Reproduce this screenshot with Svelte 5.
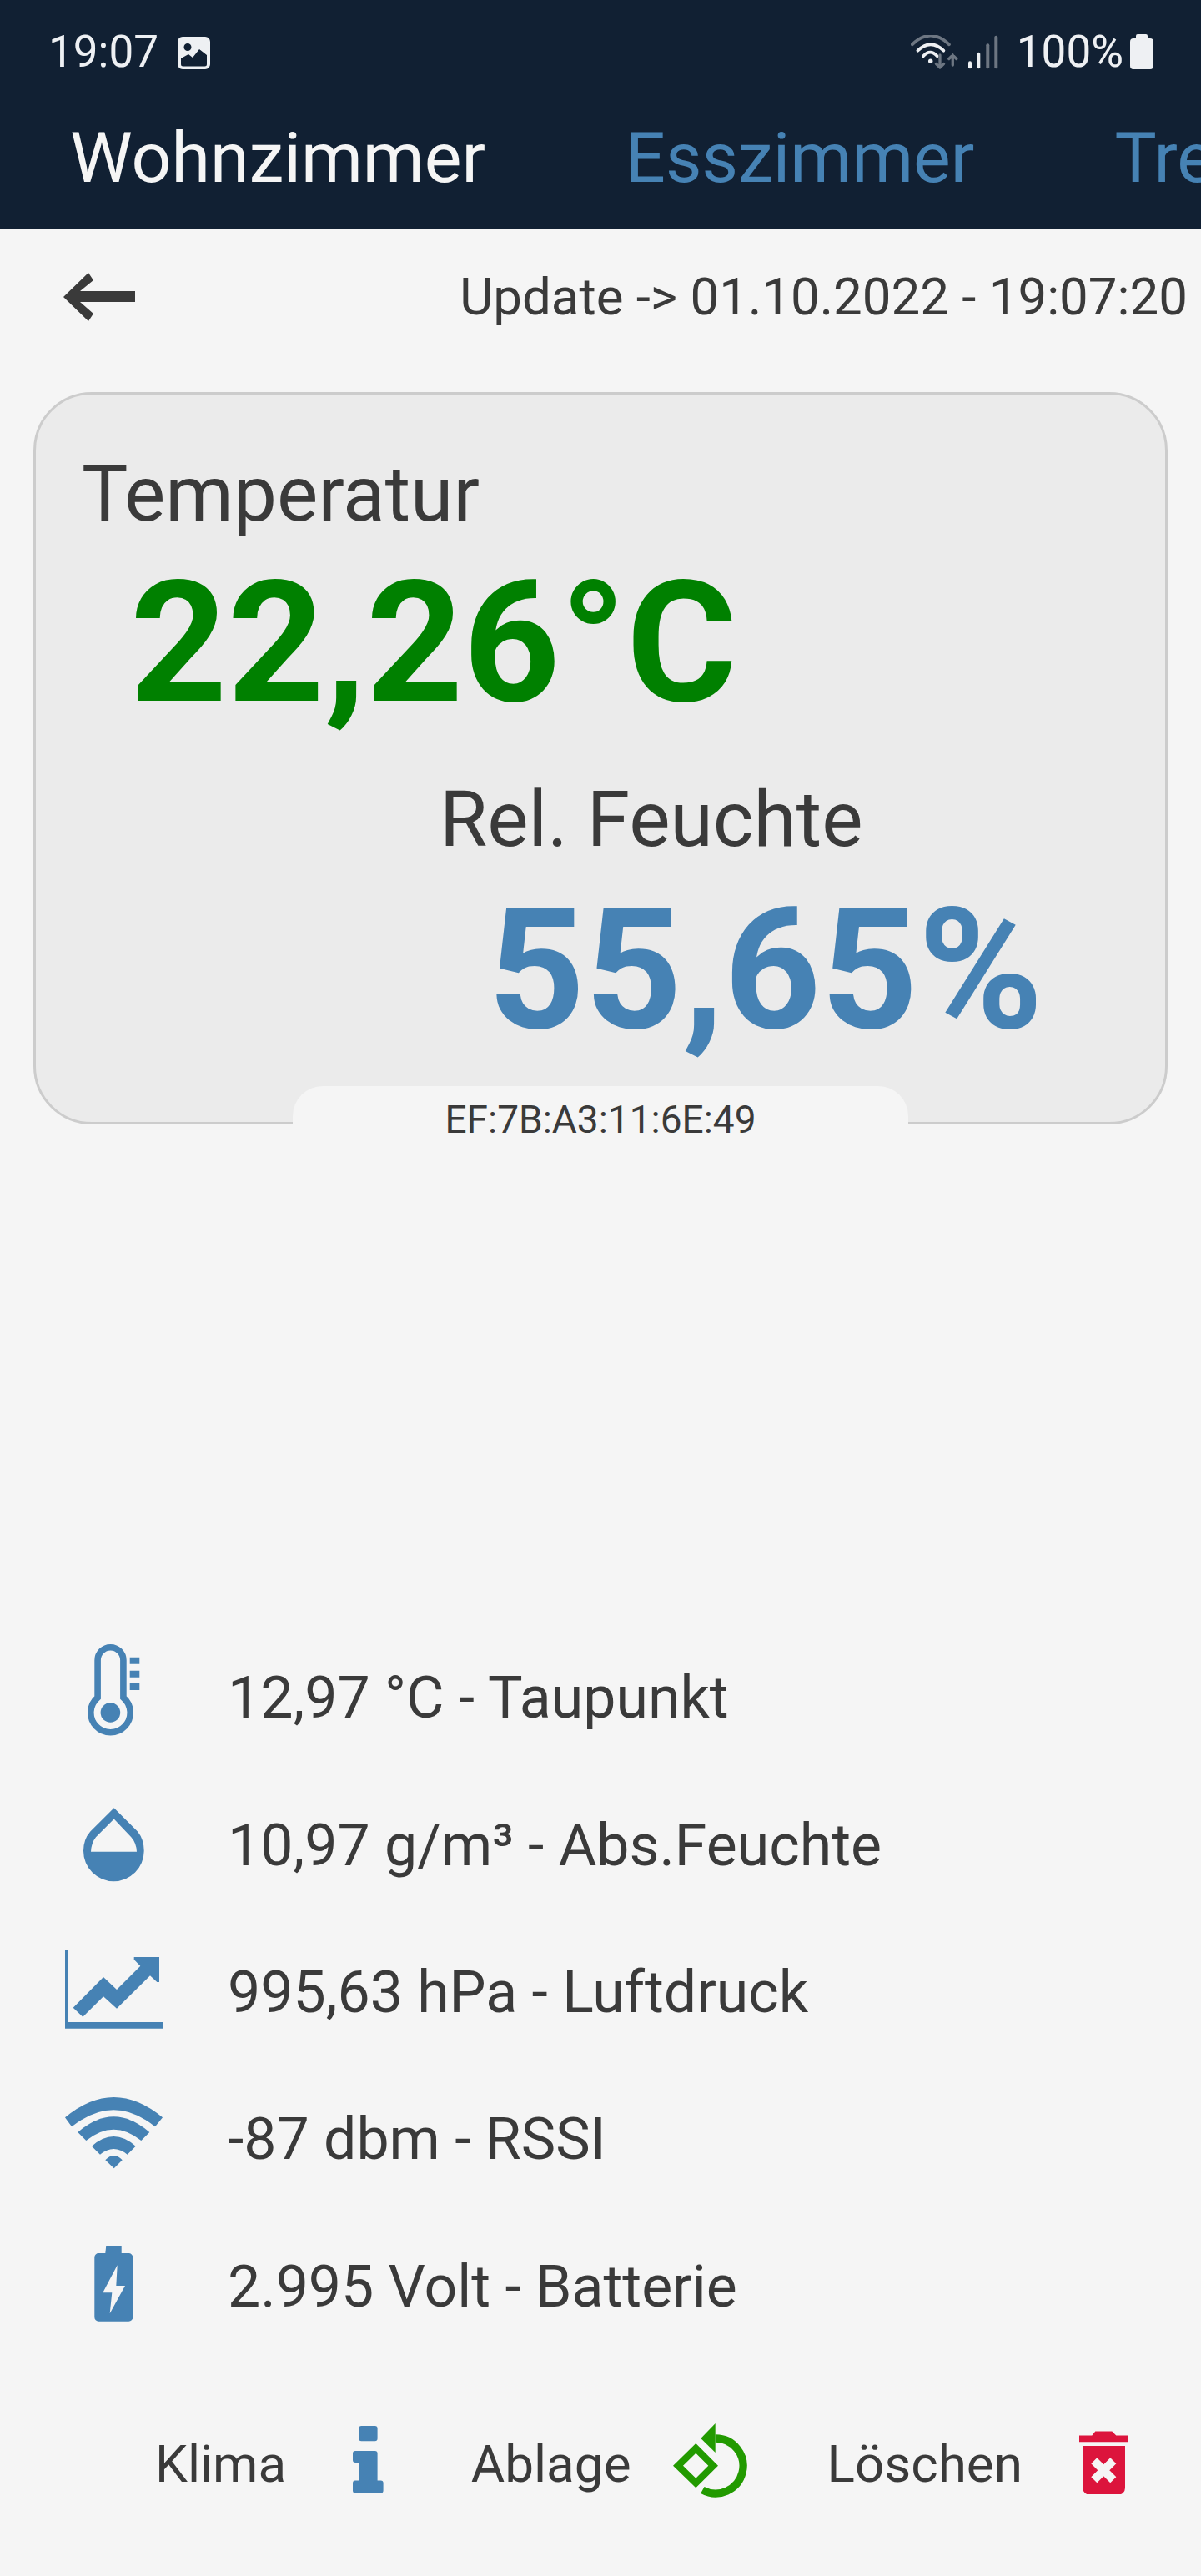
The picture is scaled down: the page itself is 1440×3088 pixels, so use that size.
<script>
	// Messwerte unter der Karte
	const readings = [
		{ icon: 'thermo', text: '12,97 °C - Taupunkt' },
		{ icon: 'drop', text: '10,97 g/m³ - Abs.Feuchte' },
		{ icon: 'chart', text: '995,63 hPa - Luftdruck' },
		{ icon: 'wifi', text: '-87 dbm - RSSI' },
		{ icon: 'battery', text: '2.995 Volt - Batterie' }
	];
</script>

<div class="page">
	<header class="top">
		<div class="status">
			<div class="status-left">
				<span>19:07</span>
				<svg class="gallery" viewBox="0 0 39 39">
					<path fill-rule="evenodd" d="M6 0h27a6 6 0 0 1 6 6v27a6 6 0 0 1-6 6H6a6 6 0 0 1-6-6V6a6 6 0 0 1 6-6zM12 8a4.500 4.500 0 1 0 0 9 4.500 4.500 0 0 0 0-9zM4 26v7a2.500 2.500 0 0 0 2.500 2.500h26A2.500 2.500 0 0 0 35 33V22l-9-7-8 10-5-4z" fill="#eef0f3"/>
				</svg>
			</div>
			<div class="status-right">
				<svg class="net" viewBox="0 0 105 41">
					<path d="M1.700 11.300Q23.850-10 46 11.300" fill="none" stroke="#6d7682" stroke-width="3.700" stroke-linecap="round"/>
					<path d="M8.400 18.700Q23.900 3.900 39.400 18.700M15 25.300Q23.350 16 31.700 25.300" fill="none" stroke="#eef0f3" stroke-width="3.700" stroke-linecap="round"/>
					<circle cx="23.700" cy="31.300" r="2.700" fill="#eef0f3"/>
					<path d="M35 24v15M30.500 34.500l4.500 4.500 4.500-4.500M50.300 36V24M45.800 28.500l4.500-4.500 4.500 4.500" fill="none" stroke="#6d7682" stroke-width="3.300" stroke-linecap="round"/>
					<rect x="69" y="31.300" width="4" height="9" rx="2" fill="#eef0f3"/>
					<rect x="79.300" y="20.700" width="4" height="19.600" rx="2" fill="#eef0f3"/>
					<rect x="90.300" y="10.300" width="4" height="30" rx="2" fill="#6d7682"/>
					<rect x="100.300" y="0.700" width="4" height="39.600" rx="2" fill="#6d7682"/>
				</svg>
				<span>100%</span>
				<svg class="batt" viewBox="0 0 28 42">
					<path d="M9 0h10a2 2 0 0 1 2 2v3h3a4 4 0 0 1 4 4v29a4 4 0 0 1-4 4H4a4 4 0 0 1-4-4V9a4 4 0 0 1 4-4h3V2a2 2 0 0 1 2-2z" fill="#eef0f3"/>
				</svg>
			</div>
		</div>
		<nav class="tabs">
			<span class="tab active">Wohnzimmer</span>
			<span class="tab">Esszimmer</span>
			<span class="tab">Treppe</span>
		</nav>
	</header>

	<div class="update-row">
		<svg class="back" viewBox="0 0 86 58">
			<path d="M0 29L30 0l6 9-16 13h66v13H20l16 14-6 9z" fill="#3a3a3a"/>
		</svg>
		<span class="update">Update -&gt; 01.10.2022 - 19:07:20</span>
	</div>

	<section class="card">
		<div class="label">Temperatur</div>
		<div class="value temp">22,26°C</div>
		<div class="hum">
			<div class="label">Rel. Feuchte</div>
			<div class="value humid">55,65%</div>
		</div>
		<div class="mac">EF:7B:A3:11:6E:49</div>
	</section>

	<ul class="readings">
		{#each readings as r}
			<li>
				<span class="icon">
					<svg viewBox="0 0 120 130" width="120" height="130">
						{#if r.icon === 'thermo'}
							<path d="M39.100 65V20.200a15.400 15.400 0 0 1 30.800 0V65a23.700 23.700 0 1 1-30.800 0z" fill="none" stroke="#4682b4" stroke-width="7.600"/>
							<circle cx="54.400" cy="83" r="11.800" fill="#4682b4"/>
							<path d="M77.700 16.700h11.600v8H77.700zM77.700 32.700h11.600v8H77.700zM77.700 47.700h11.600V56H77.700z" fill="#4682b4"/>
						{:else if r.icon === 'drop'}
							<path fill-rule="evenodd" d="M58.700 20.200L30.300 48.500Q22 58 22 71.800a36.350 36.350 0 0 0 72.700 0Q94.700 58 87 48.500zM58.700 33.500L37 55.200Q31.500 62 31 72.800h55Q85.500 62 79.300 55.200z" fill="#4682b4"/>
						{:else if r.icon === 'chart'}
							<path d="M0 15h3.700v86H117v7.700H0z" fill="#4682b4"/>
							<path d="M9.700 83.700L46 47l16 15 28.300-28.300L82.700 26v-3H113v30h-2.700l-8.300-7.700L62 84.700 46 70.300 21.300 94.700z" fill="#4682b4"/>
						{:else if r.icon === 'wifi'}
							<path d="M0 39.300Q58.500-9.300 117 39.300l-9 11Q58.500 10.300 8 50.300zM15.300 57Q58.300 19.700 101.300 57l-10 10Q58.300 40.300 25.300 67zM32 73.700Q58.300 50.300 84.700 73.700l-10 10Q58.300 70.300 42 83.700zM48.300 90.300Q58.500 79.700 68.700 90.300L58.700 100.300z" fill="#4682b4"/>
						{:else}
							<path fill-rule="evenodd" d="M49.300 16h18.400v9h8.600a5 5 0 0 1 5 5v71.700a5 5 0 0 1-5 5h-36a5 5 0 0 1-5-5V30a5 5 0 0 1 5-5h8zM62.700 39.300L45.300 72.300h11L53.700 97.300 72 64H61.300z" fill="#4682b4"/>
						{/if}
					</svg>
				</span>
				<span>{r.text}</span>
			</li>
		{/each}
	</ul>

	<footer class="actions">
		<span>Klima</span>
		<svg class="info" viewBox="0 0 36.600 80.600">
			<path d="M10.300 0h16.300a3 3 0 0 1 3 3v12.300a3 3 0 0 1-3 3H10.300a3 3 0 0 1-3-3V3a3 3 0 0 1 3-3zM3 30h23.600a3 3 0 0 1 3 3v32.600h4a3 3 0 0 1 3 3v9a3 3 0 0 1-3 3H3a3 3 0 0 1-3-3v-9a3 3 0 0 1 3-3h4.300V44H3a3 3 0 0 1-3-3v-8a3 3 0 0 1 3-3z" fill="#4682b4"/>
		</svg>
		<span class="after-info">Ablage</span>
		<svg class="restore" viewBox="0 0 89 88.400">
			<path fill-rule="evenodd" d="M27.300 24L54 50.700 27.300 77.300 0 50.700zM27.300 35.700L12 50.700l15.300 15 15-15z" fill="#229a00"/>
			<path d="M50.700 0v35L33.300 18z" fill="#229a00"/>
			<path d="M50.700 18A33 33 0 1 1 35.300 80" fill="none" stroke="#229a00" stroke-width="9.300"/>
		</svg>
		<span class="after-restore">Löschen</span>
		<svg class="trash" viewBox="0 0 58.700 76.600">
			<path d="M0 5.600h15.300l4-5h20l5 5h14.400v7.700H0zM4.300 18H55v50.600a8 8 0 0 1-8 8H12.300a8 8 0 0 1-8-8z" fill="#dc143c"/>
			<path d="M17.800 35.800l23 23M40.800 35.800l-23 23" stroke="#f5f5f5" stroke-width="10" fill="none"/>
		</svg>
	</footer>
</div>

<style>
	:global(body) {
		margin: 0;
		background: #f5f5f5;
	}

	.page {
		width: 1440px;
		height: 3088px;
		overflow: hidden;
		background: #f5f5f5;
		color: #3a3a3a;
		font-family: Roboto, sans-serif;
	}

	.top {
		height: 275px;
		background: #112033;
		box-sizing: border-box;
		padding-top: 38px;
		overflow: hidden;
	}

	.status {
		display: flex;
		justify-content: space-between;
		padding: 0 57px 0 58px;
		height: 48px;
		align-items: center;
		color: #eef0f3;
		font-size: 53px;
	}

	.status-left,
	.status-right {
		display: flex;
		align-items: center;
	}

	.gallery {
		width: 39px;
		height: 39px;
		margin-left: 23px;
		margin-top: 2px;
	}

	.net {
		width: 105px;
		height: 41px;
		margin-right: 22px;
	}

	.batt {
		width: 28px;
		height: 42px;
		margin-left: 8px;
	}

	.tabs {
		display: flex;
		gap: 168px;
		padding: 54px 0 0 84px;
		white-space: nowrap;
	}

	.tab {
		font-size: 84.300px;
		line-height: 100px;
		color: #4682b4;
	}

	.tab.active {
		color: #f5f5f5;
	}

	.update-row {
		display: flex;
		justify-content: space-between;
		align-items: center;
		height: 82px;
		margin-top: 40px;
		padding: 0 16px 0 76px;
	}

	.back {
		width: 86px;
		height: 58px;
	}

	.update {
		font-size: 61.800px;
	}

	.card {
		position: relative;
		box-sizing: border-box;
		height: 878px;
		margin: 73px 40px 0;
		padding: 68px 55px 0;
		border: 3px solid #ccc;
		border-radius: 70px;
		background: #ebebeb;
	}

	.label {
		font-size: 93px;
		line-height: 104px;
	}

	.value {
		font-size: 203px;
		line-height: 252px;
		font-weight: 700;
		padding-left: 58px;
	}

	.temp {
		color: #008000;
	}

	.humid {
		margin-top: 2px;
		color: #4682b4;
	}

	.hum {
		margin-left: 429px;
		margin-top: 34px;
	}

	.mac {
		position: absolute;
		left: 308px;
		top: 829px;
		width: 738px;
		height: 60px;
		border-radius: 36px 36px 0 0;
		background: #f5f5f5;
		text-align: center;
		font-size: 46px;
		line-height: 80px;
	}

	.readings {
		list-style: none;
		margin: 599px 0 0;
		padding: 0 0 0 78px;
	}

	.readings li {
		display: flex;
		align-items: center;
		height: 176.400px;
		font-size: 69.800px;
	}

	.icon {
		width: 195px;
		height: 130px;
		flex: none;
	}

	.icon svg {
		display: block;
	}

	.actions {
		display: flex;
		align-items: center;
		height: 100px;
		margin-top: 75px;
		padding-left: 186px;
		font-size: 62px;
	}

	.info {
		width: 36.600px;
		height: 80.600px;
		margin-left: 80px;
		margin-bottom: 12px;
	}

	.after-info {
		margin-left: 105px;
	}

	.restore {
		width: 89px;
		height: 88.400px;
		margin-left: 50px;
		margin-bottom: 9px;
	}

	.after-restore {
		margin-left: 96px;
	}

	.trash {
		width: 58.700px;
		height: 76.600px;
		margin-left: 68px;
		margin-bottom: 4px;
	}
</style>
